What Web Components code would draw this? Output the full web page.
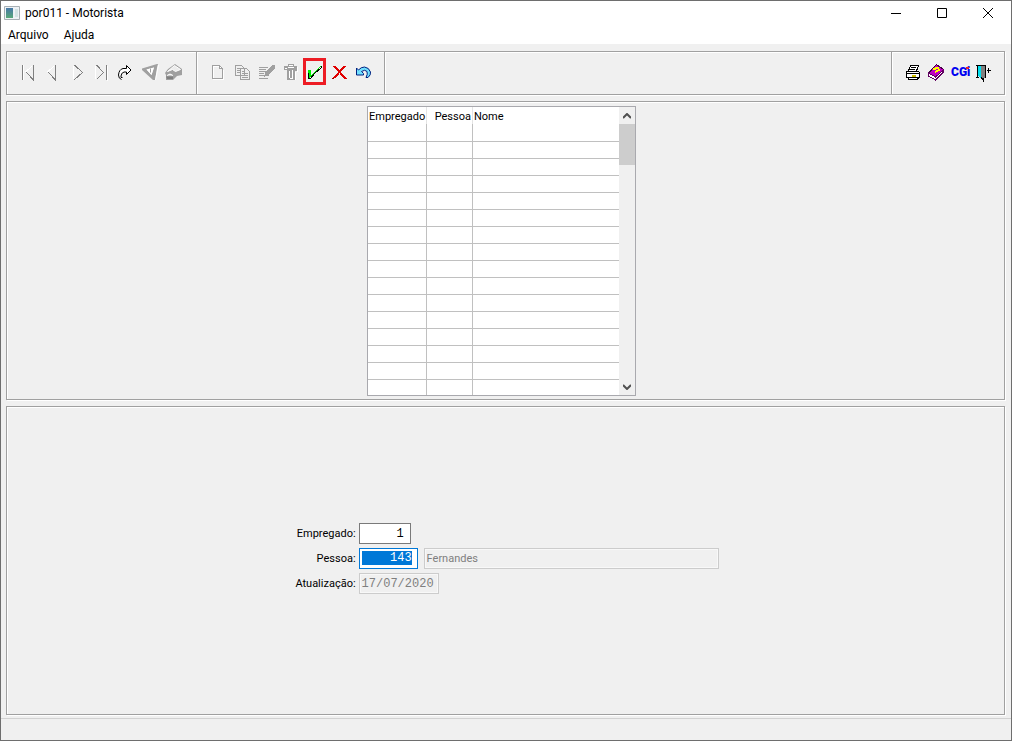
<!DOCTYPE html>
<html lang="pt-BR">
<head>
<meta charset="utf-8">
<title>por011 - Motorista</title>
<style>
html,body{margin:0;height:100%}
body{font-family:Roboto,sans-serif;font-size:12px;color:#000}
</style>
</head>
<body>
<app-window>
  <title-bar slot="title">por011 - Motorista</title-bar>
  <menu-bar slot="menu"></menu-bar>
  <tool-bar></tool-bar>
  <etched-panel class="list"><driver-grid></driver-grid></etched-panel>
  <etched-panel class="fill"><driver-form></driver-form></etched-panel>
</app-window>
<script>
const define = (name, html) => customElements.define(name, class extends HTMLElement {
  constructor() {
    super();
    this.attachShadow({ mode: 'open' }).innerHTML = html;
  }
});

define('app-window', `
<style>
:host{display:flex;flex-direction:column;box-sizing:border-box;min-height:100vh;border:1px solid #6e6e6e;background:#f0f0f0}
main{flex:1;display:flex;flex-direction:column;gap:6px;padding:7px 6px 3px 5px}
footer{height:21px;border-top:1px solid #d2d2d2}
::slotted(.fill){flex:1}
</style>
<slot name="title"></slot><slot name="menu"></slot>
<main><slot></slot></main>
<footer></footer>`);

define('title-bar', `
<style>
:host{display:flex;align-items:center;height:24px;background:#fff;padding-left:3px}
.name{flex:1;padding-left:5px}
button{width:46px;height:24px;border:0;padding:0;background:none;display:flex;justify-content:center;align-items:center}
</style>
<svg width="16" height="14" viewBox="0 0 16 14" aria-hidden="true">
<defs><linearGradient id="a" x2="0" y2="1"><stop stop-color="#4878a8"/><stop offset="1" stop-color="#58a878"/></linearGradient></defs>
<path d="M.5 .5h15v13H.5z" fill="#eef2f5" stroke="#a8b0b4"/><path d="M2 2h7v10H2z" fill="url(#a)"/><path d="M11 3h3v8h-3z" fill="#d4e4e4"/></svg>
<span class="name"><slot></slot></span>
<button aria-label="Minimizar"><svg width="10" height="10"><path d="M0 5.500h10" stroke="#000"/></svg></button>
<button aria-label="Maximizar"><svg width="10" height="10"><path d="M.5.5h9v9h-9z" fill="none" stroke="#000"/></svg></button>
<button aria-label="Fechar"><svg width="10" height="10"><path d="M0 0l10 10M10 0L0 10" stroke="#000"/></svg></button>`);

define('menu-bar', `
<style>
:host{display:block;background:#fff}
nav{display:flex;gap:15px;height:17px;padding:2px 0 0 7px}
button{border:0;padding:0;background:none;font:inherit;color:inherit;line-height:17px}
</style>
<nav><button>Arquivo</button><button>Ajuda</button></nav>`);

define('etched-panel', `
<style>
:host{display:flex;justify-content:center;align-items:center;border:1px solid #a0a0a0;box-shadow:inset 1px 1px #fff,1px 1px #fff}
</style><slot></slot>`);

const tools = {
  first: ['Primeiro', '<path d="M7.500 7v15" stroke="#fff" fill="none"/><path d="M6.500 7v15M17.500 7v15L10.500 14.500" stroke="#808080" fill="none"/><path d="M16.500 7.500L9.500 14" stroke="#fff"/>'],
  prev: ['Anterior', '<path d="M15.500 7v15L8.500 14.500" stroke="#808080" fill="none"/><path d="M14.500 7.500L7.500 14" stroke="#fff"/>'],
  next: ['Próximo', '<path d="M9.500 8v13" stroke="#fff"/><path d="M10.500 7L18.500 14.500L10.500 21.500" stroke="#808080" fill="none"/>'],
  last: ['Último', '<path d="M7.500 8v13M19.500 8v15" stroke="#fff"/><path d="M8.500 7L15.500 14.500L8.500 21.500M18.500 7v15" stroke="#808080" fill="none"/>'],
  go: ['Ir para', '<path d="M9.500 21.500Q6.500 20.500 6.500 17Q7 11.500 11 10.500H14.500V7.500L19 12L14.500 16.500V14H12Q9 15 9 18V19.500H10.500" fill="#fff" stroke="#000" stroke-width="1"/>'],
  filter: ['Filtrar', '<path fill-rule="evenodd" d="M6 10.500L21 6H22L21 10L19 22H17L6 12zM10.500 11.500L15.500 17L18 9.500z" fill="#a0a0a0"/><path d="M10.500 11.500L15.500 17L18 9.500z" fill="#fff"/><path d="M22.500 7L19.500 22" stroke="#fff"/><path d="M14.500 10.500v4" stroke="#a0a0a0"/>'],
  find: ['Localizar', '<path d="M5 15L8 11L15 6L22 11V17L17 18L13 22H6V17z" fill="#a0a0a0"/><path d="M7.500 13.500L14.500 7.500L20.500 11.500L15.500 13.500L12.500 11.500L7.500 13.500zM7 17.500Q10 14.500 13 17.500" fill="#ececec" stroke="#fff"/><path d="M6 18.500h7v2.500H7z" fill="#808080"/>'],
  blank: ['Novo', '<path d="M7.500 8.500h6l4 4v9h-10z" fill="none" stroke="#fff"/><path d="M6.500 7.500h7l3 3v10h-10zM13.500 7.500v3h3" fill="none" stroke="#a0a0a0"/>'],
  copy: ['Copiar', '<path d="M5.500 7.500h6l3 3v7h-9z M10.500 10.500h6l3 3v8h-9z" fill="#f0f0f0" stroke="#a0a0a0"/><path d="M7 10.500h3M7 12.500h3M7 14.500h3M12 13.500h3M12 15.500h6M12 17.500h6M12 19.500h6" stroke="#a0a0a0"/>'],
  edit: ['Editar', '<path d="M5 9.500h9M5 11.500h7M5 13.500h7M5 15.500h5M5 17.500h10M5 20.500h9" stroke="#a0a0a0"/><path d="M18 7h3v3l-7 7l-4 2l1-4z" fill="#a0a0a0"/>'],
  trash: ['Excluir', '<path d="M6 8h13v5h-2v9H9V12H6zM10 6h6v2h-6z" fill="#a0a0a0"/><path d="M11 7.500h4M7 10.500h2M10 9.500h6M11.500 13v7M14.500 12v8M12 20.500h3" stroke="#fff"/><path d="M19.500 9v5M17.500 14v8" stroke="#fff"/>'],
  ok: ['Confirmar', '<path d="M6 12h3v5l9-9h1v1l-7 6l-4 5H6z" fill="#00f000"/><path d="M6.500 15v5.500h2l4-5l7-6V8" stroke="#000" fill="none"/>'],
  cancel: ['Cancelar', '<path d="M8 8L20 21M19 8L8 20" stroke="#e00000" stroke-width="2"/><path d="M8 20L6 21" stroke="#900"/>'],
  undo: ['Desfazer', '<path d="M6.500 10v7h7v-1.500l-2-2Q15 11 17 13.500Q18 16 16 19.500H18Q21 17 20.500 14Q19 9.500 14.500 9Q11 9 8.500 12z" fill="#70e0ff" stroke="#002080"/>'],
  print: ['Imprimir', '<path d="M8.500 13L10.500 7.500h8L16.500 13M6.500 13.500h12l1 1v5h-13zM8 19.500v2h9l2-2" fill="#fff" stroke="#000"/><path d="M11 9.500h5M10 11.500h5M7 15.500h12" stroke="#000"/><path d="M12 18h4" stroke="#d0c000" stroke-width="2"/>'],
  help: ['Ajuda', '<path d="M4.500 15L12.500 6.500L19.500 11.500L11.500 20.500z" fill="#c000c0" stroke="#400040"/><path d="M4.500 15v3L11.500 22L19.500 14v-2L11.500 19z" fill="#fff" stroke="#600060"/><path d="M9 11l5-1l1 2l-4 2" stroke="#ff0" stroke-width="2" fill="none"/>'],
  cgi: ['CGI', '<text x="3" y="18" font-family="Roboto" font-size="12" font-weight="900" fill="#0000f0">CGi</text><path d="M18 9h3v2h-3z" fill="#f02020"/>'],
  exit: ['Sair', '<path d="M4 7.500h10M5.500 7v12M13.500 7v13M4 19.500h3" stroke="#000"/><path d="M6 8h3v12L6 18z" fill="#00e0f0"/><path d="M9 8h4v12H9z" fill="#808080"/><path d="M9 19l2 3v-2" stroke="#000"/><path d="M15 12.500h4M16.500 10v5" stroke="#000" fill="none"/>']
};
const buttons = names => names.split(' ').map(n => `<button class="${n}" aria-label="${tools[n][0]}"><svg width="24" height="27" viewBox="0 0 24 27" shape-rendering="${/go|undo|find|filter/.test(n) ? 'auto' : 'crispEdges'}">${tools[n][1]}</svg></button>`).join('');

define('tool-bar', `
<style>
:host{display:flex;height:42px;border:1px solid #a0a0a0;box-shadow:inset 1px 1px #fff,1px 1px #fff}
div{display:flex;align-items:flex-start;padding:6px 10px 0 9px}
div+div{border-left:1px solid #a0a0a0;box-shadow:inset 1px 1px #fff}
.nav{padding-right:12px}
div.space{flex:1;padding:0}
.sys{padding-left:8px;padding-right:8px}
button{width:24px;height:27px;padding:0;border:0;background:none;position:relative}
svg{display:block}
.ok::after{content:"";position:absolute;inset:0 0 0 1px;border:3px solid #ed1c24}
</style>
<div class="nav">${buttons('first prev next last go filter find')}</div>
<div class="edit">${buttons('blank copy edit trash ok cancel undo')}</div>
<div class="space"></div>
<div class="sys">${buttons('print help cgi exit')}</div>`);

define('driver-grid', `
<style>
:host{display:flex;box-sizing:border-box;height:290px;margin:4px 8px 3px 0;border:1px solid #a9a9ae;background:#fff;font:11px/15px Roboto,sans-serif}
.rows{overflow:hidden}
table{border-collapse:separate;border-spacing:0;table-layout:fixed;width:251px}
th,td{box-sizing:border-box;height:17px;padding:0;border-right:1px solid #c0c0c0;border-bottom:1px solid #c0c0c0}
th{font-weight:400;text-align:right;border-right-color:#e4e4e4;border-bottom:0;padding:2px 1px 0}
th:last-child{text-align:left}
th:last-child,td:last-child{border-right:0}
tbody tr:first-child td{height:18px}
.bar{width:16px;background:#f0f0f0;display:flex;flex-direction:column;align-items:center}
.bar button{border:0;padding:0;background:none;width:16px;height:17px;display:flex;align-items:center;justify-content:center}
.thumb{width:16px;height:41px;background:#cdcdcd}
.track{flex:1}
</style>
<div class="rows"><table><colgroup><col style="width:59px"><col style="width:46px"><col></colgroup>
<thead><tr><th>Empregado</th><th>Pessoa</th><th>Nome</th></tr></thead>
<tbody>${'<tr><td></td><td></td><td></td></tr>'.repeat(16)}</tbody></table></div>
<div class="bar"><button aria-label="Acima"><svg width="8" height="6"><path d="M0 5l4-4l4 4" fill="none" stroke="#505050" stroke-width="2"/></svg></button>
<div class="thumb"></div><div class="track"></div>
<button aria-label="Abaixo"><svg width="8" height="6"><path d="M0 1l4 4l4-4" fill="none" stroke="#505050" stroke-width="2"/></svg></button></div>`);

define('driver-form', `
<style>
:host{display:block;padding:0 0 4px 3px;font:11px/21px Roboto,sans-serif}
form{display:grid;grid-template-columns:auto auto;column-gap:3px;row-gap:4px}
label{text-align:right}
.line{display:flex;gap:6px}
input{box-sizing:border-box;height:21px;margin:0;padding:1px 6px 0 2px;border:1px solid #7a7a7a;border-radius:0;outline:0;background:#fff;color:#000;font:12px "Liberation Mono",monospace}
#emp{width:52px;text-align:right}
#pes{width:59px;text-align:right;padding:2px 5px 3px 2px;border-color:#0078d7;color:#fff;background:linear-gradient(#0078d7,#0078d7) content-box,#fff}
#nome{width:295px;padding-top:0;font:11px Roboto,sans-serif}
#data{width:80px;padding-right:0}
input:disabled{color:#7f7f7f;background:#f0f0f0;border-color:#ccc;box-shadow:inset 0 0 0 1px #f8f8f8}
</style>
<form>
<label for="emp">Empregado:</label><div class="line"><input id="emp" value="1"></div>
<label for="pes">Pessoa:</label><div class="line"><input id="pes" value="143"><input id="nome" aria-label="Nome" value="Fernandes" disabled></div>
<label for="data">Atualização:</label><div class="line"><input id="data" value="17/07/2020" disabled></div>
</form>`);
</script>
</body>
</html>
